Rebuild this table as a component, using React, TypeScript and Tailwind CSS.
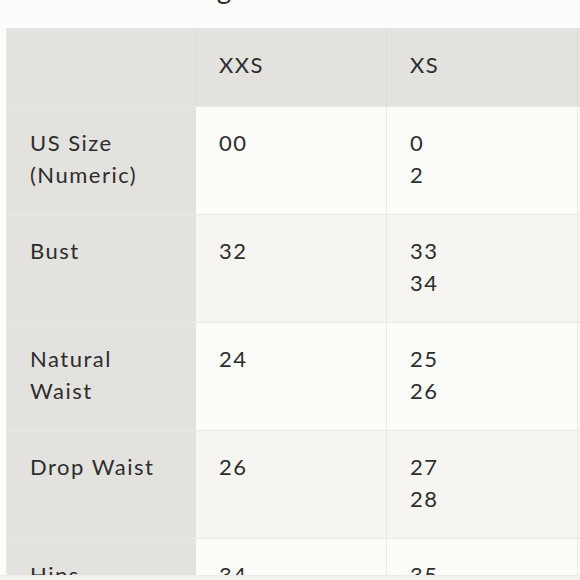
import React from "react";

type Row = {
    label: string[];
    values: string[][];
};

// Size chart rows, label column followed by one cell per size
const sizes = ["XXS", "XS", "S"];

const rows: Row[] = [
    { label: ["US Size", "(Numeric)"], values: [["00"], ["0", "2"], ["4", "6"]] },
    { label: ["Bust"], values: [["32"], ["33", "34"], ["35", "36"]] },
    { label: ["Natural", "Waist"], values: [["24"], ["25", "26"], ["27", "28"]] },
    { label: ["Drop Waist"], values: [["26"], ["27", "28"], ["29", "30"]] },
    { label: ["Hips"], values: [["34"], ["35", "36"], ["37", "38"]] },
];

const colWidths = ["w-[189px]", "w-[191px]", "w-[191px]", "w-[191px]"];

const App: React.FC = () => {
    return (
        <div
            className="w-[580px] h-[580px] overflow-hidden bg-[#fcfcfa] text-[#2d2d2d]"
            style={{ fontFamily: "Lato, 'Noto Sans', sans-serif" }}
        >
            {/* Heading, mostly scrolled out of view */}
            <div className="h-[28px] overflow-hidden">
                <h2 className="mt-[-28px] pl-[155px] text-[28px] leading-[32px] tracking-[1px]">
                    Sizing
                </h2>
            </div>

            <div className="ml-[6px] w-max border-l border-[#eeede9]">
                {/* Header row */}
                <div className="flex h-[78px] bg-[#e3e2df]">
                    <div className={`${colWidths[0]} shrink-0 border-r border-[#dddcd9]`} />
                    {sizes.map((size, i) => (
                        <div
                            key={size}
                            className={`${colWidths[i + 1]} shrink-0 border-r border-[#dcdbd8] pl-[23px] pt-[21px] text-[22px] leading-[32px] tracking-[1.5px]`}
                        >
                            {size}
                        </div>
                    ))}
                </div>

                {/* Body rows */}
                {rows.map((row, r) => (
                    <div
                        key={row.label.join(" ")}
                        className={`flex h-[108px] border-t border-[#eae9e6] ${r % 2 === 1 ? "bg-[#f6f5f2]" : "bg-[#fcfcf9]"}`}
                    >
                        <div className={`${colWidths[0]} shrink-0 bg-[#e3e2df] pl-[23px] pt-[20px] text-[22px] leading-[32px] tracking-[1.5px]`}>
                            {row.label.map((line) => (
                                <div key={line}>{line}</div>
                            ))}
                        </div>
                        {row.values.map((cell, i) => (
                            <div
                                key={i}
                                className={`${colWidths[i + 1]} shrink-0 border-r border-[#eae9e6] pl-[23px] pt-[20px] text-[22px] leading-[32px] tracking-[1.5px]`}
                            >
                                {cell.map((v) => (
                                    <div key={v}>{v}</div>
                                ))}
                            </div>
                        ))}
                    </div>
                ))}
            </div>

            {/* Bottom bar overlaying the page */}
            <div className="fixed bottom-0 left-0 w-[580px] h-[5px] bg-[#f3f2ef] border-t border-[#ecebe8]" />
        </div>
    );
};

export default App;
